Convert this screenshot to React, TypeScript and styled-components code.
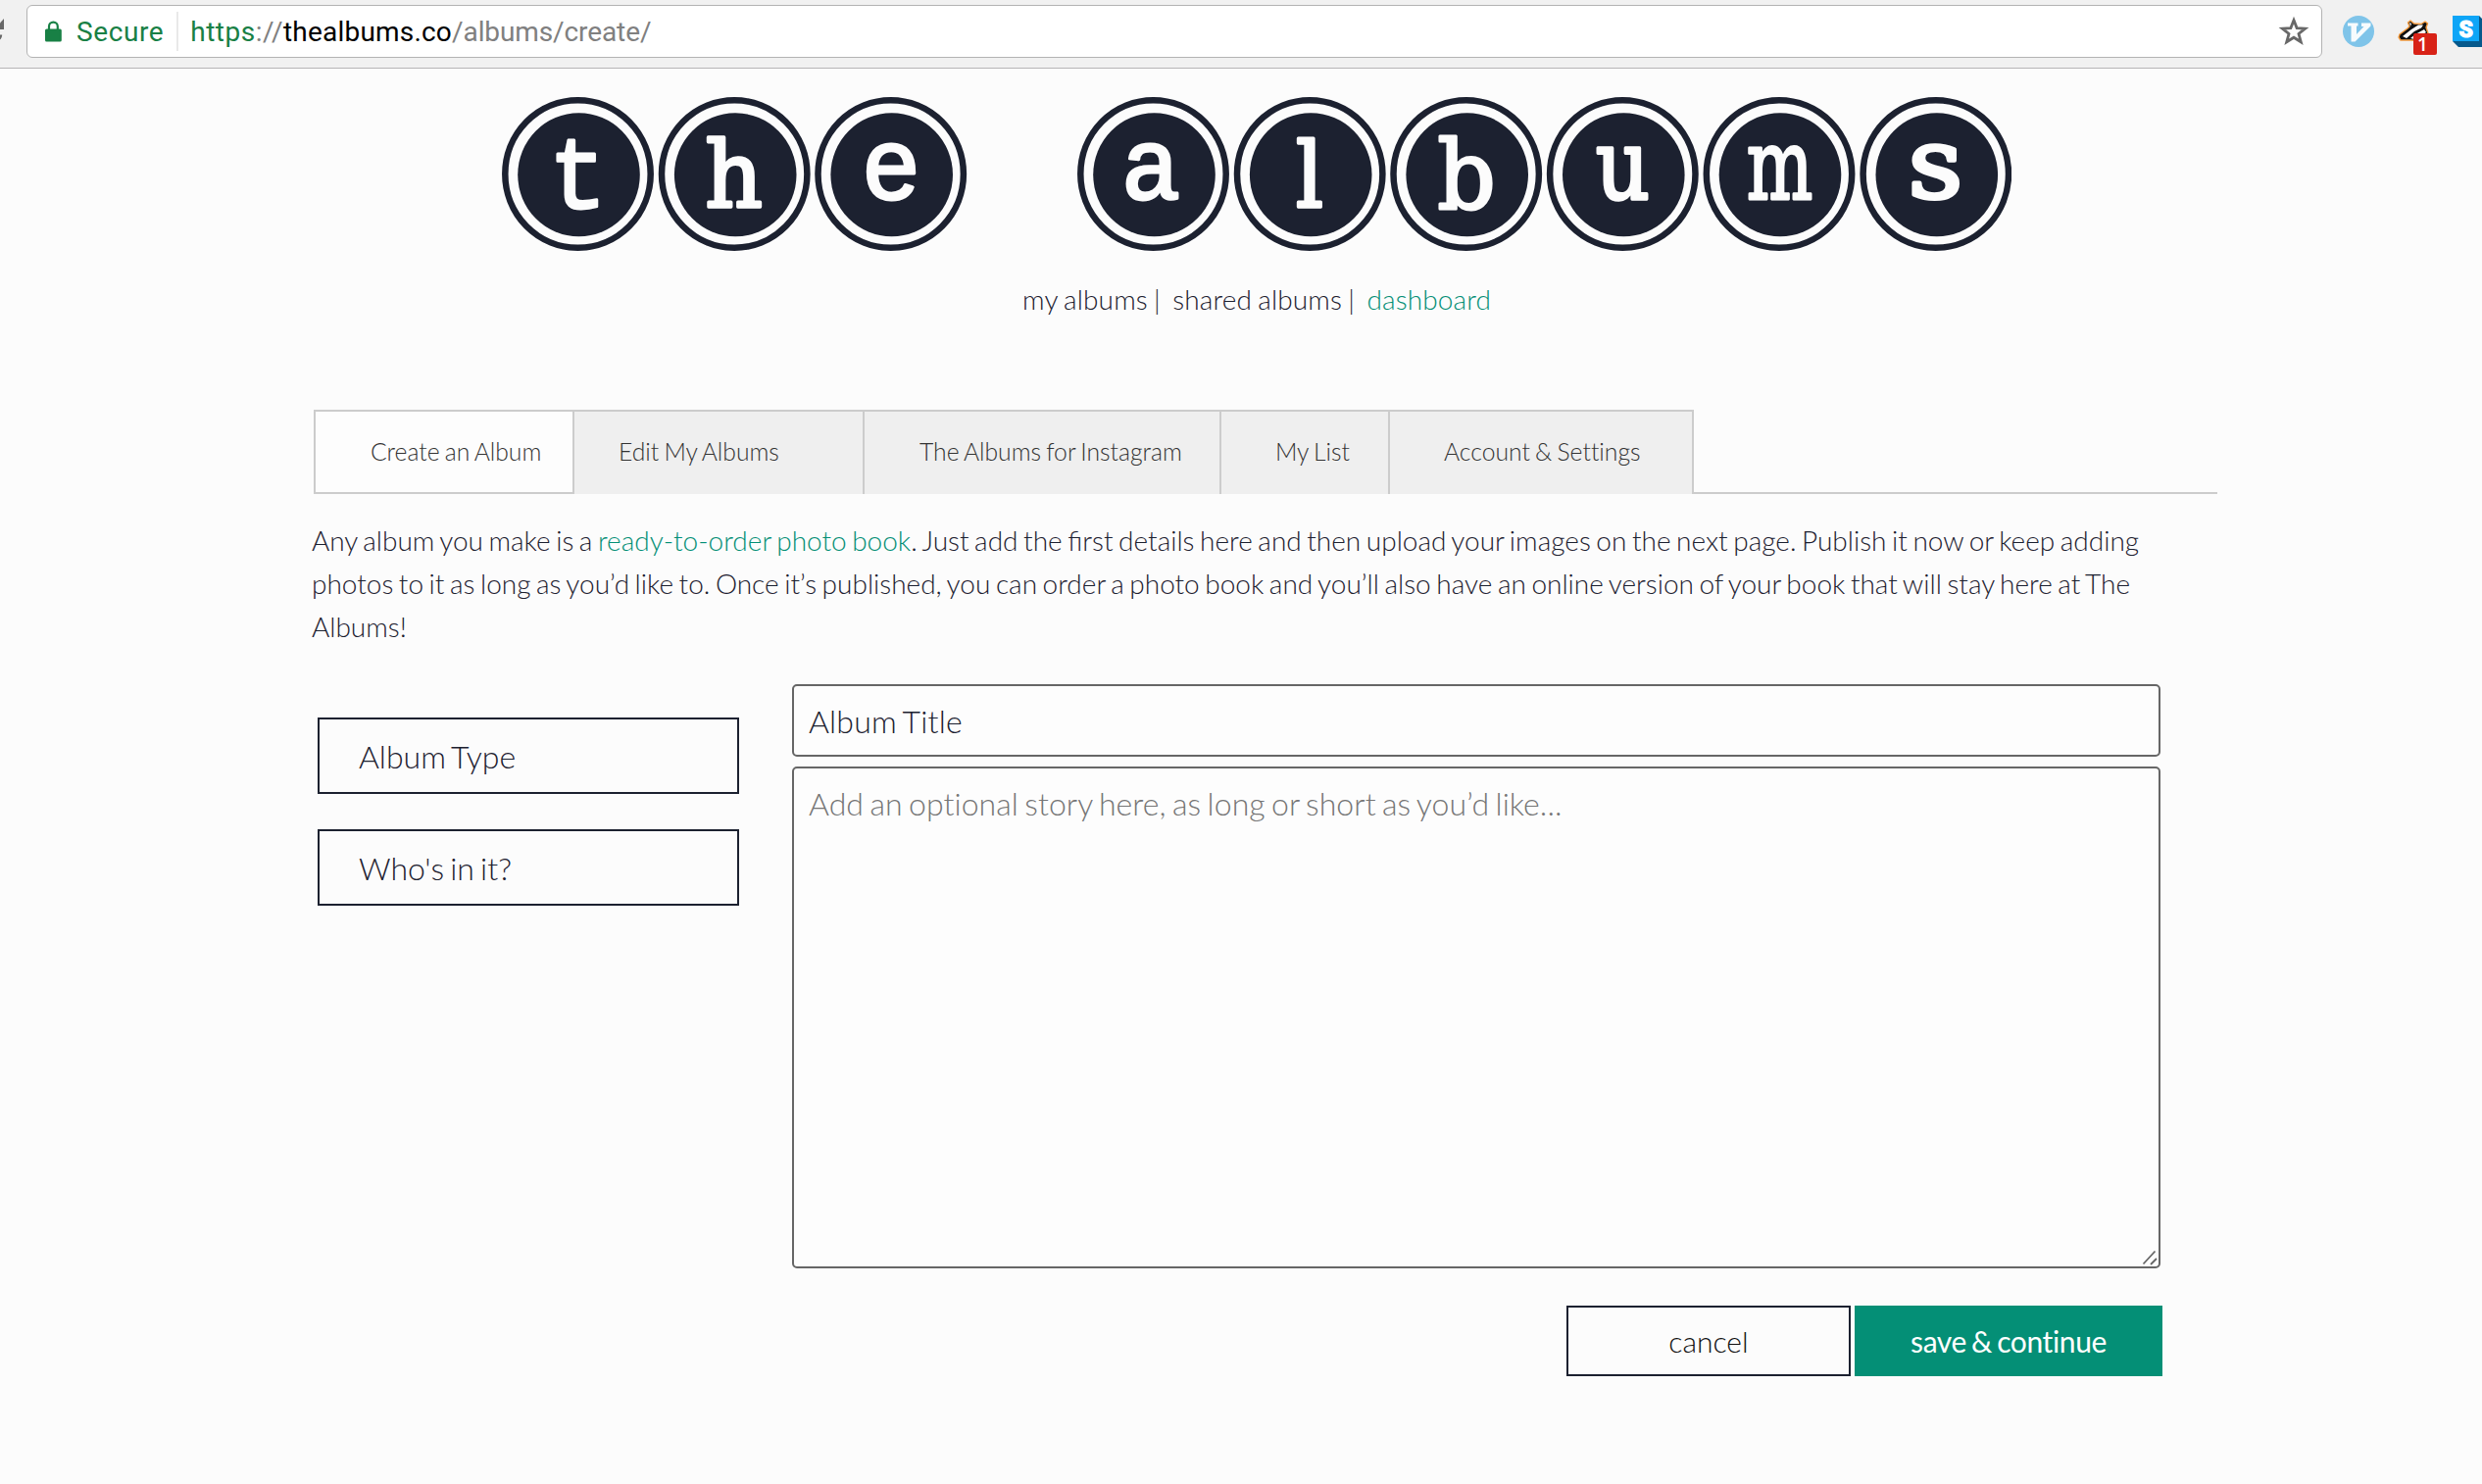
import React from "react";
import styled, { createGlobalStyle } from "styled-components";

const ink = "#1c2130";
const green = "#048f76";

const GlobalStyle = createGlobalStyle`
  * { box-sizing: border-box; }
  html, body { margin: 0; background: #fcfcfc; }
  body {
    font-family: Lato, "Open Sans", sans-serif;
    font-weight: 300;
    color: ${ink};
    overflow: hidden;
  }
`;

const Page = styled.div`
  width: 2532px;
  height: 1514px;
  overflow: hidden;
`;

const BrowserBar = styled.header`
  display: flex;
  align-items: flex-start;
  height: 70px;
  padding-top: 5px;
  background: #f1f1f1;
  border-bottom: 1px solid #b6b4b6;
`;

const ReloadSlot = styled.div`
  flex: none;
  width: 27px;
  height: 54px;
  svg { display: block; }
`;

const AddressField = styled.div`
  display: flex;
  flex: none;
  align-items: center;
  width: 2342px;
  height: 54px;
  padding: 0 12px 0 18px;
  border: 1px solid #b3b3b3;
  border-radius: 6px;
  background: #fff;
  font-family: Roboto, "Liberation Sans", sans-serif;
  font-weight: 400;
  font-size: 28px;
  white-space: nowrap;
`;

const Secure = styled.span`
  margin: 1px 0 0 15px;
  color: #188045;
  letter-spacing: 0.6px;
`;

const FieldDivider = styled.span`
  width: 2px;
  height: 40px;
  margin: 0 12px 0 13px;
  background: #e9e9e9;
`;

const Url = styled.span`
  flex: 1;
  margin-top: 1px;
  color: #808080;
  letter-spacing: -0.1px;
`;
const Scheme = styled.span`
  letter-spacing: 0.5px;
`;
const Protocol = styled.span`color: #188045;`;
const Host = styled.span`
  color: #000;
  letter-spacing: 0.2px;
`;

const Extensions = styled.div`
  display: flex;
  margin-left: 20px;
  height: 54px;
  svg { display: block; flex: none; }
`;

const Masthead = styled.div`
  display: flex;
  flex-direction: column;
  align-items: center;
  padding: 27px 0 0 32px;
`;

const LogoSvg = styled.svg`display: block;`;

const SiteNav = styled.nav`
  display: flex;
  height: 44px;
  margin-top: 26px;
  font-size: 28px;
  line-height: 44px;
  letter-spacing: 0.12px;
  word-spacing: -1.5px;
  white-space: pre;
`;
const NavItem = styled.span<{ $active?: boolean }>`
  color: ${(p) => (p.$active ? green : ink)};
`;

const Content = styled.main`
  width: 1944px;
  margin: 91px 0 0 318px;
`;

const TabRow = styled.div`
  display: flex;
  height: 86px;
  margin-left: 2px;
`;
const Tab = styled.div<{ $width: number; $indent: number; $active?: boolean }>`
  width: ${(p) => p.$width}px;
  padding: 22px 0 0 ${(p) => p.$indent}px;
  border-top: 2px solid #ccc;
  border-right: 2px solid #ccc;
  border-left: ${(p) => (p.$active ? "2px solid #ccc" : "none")};
  border-bottom: ${(p) => (p.$active ? "2px solid #ccc" : "none")};
  background: ${(p) => (p.$active ? "#fdfdfd" : "#efefef")};
  color: #333;
  font-size: 24.7px;
  line-height: 38px;
  word-spacing: -1.5px;
  font-variant-ligatures: none;
  white-space: nowrap;
`;
const TabFill = styled.div`
  flex: 1;
  border-bottom: 2px solid #ccc;
`;

const Intro = styled.p`
  margin: 25px 0 0;
  font-size: 28px;
  line-height: 44px;
  word-spacing: -2.05px;
  white-space: nowrap;
`;
const IntroLine = styled.span`display: block;`;
const Accent = styled.span`color: ${green};`;

const Form = styled.div`
  display: flex;
  gap: 54px;
  margin: 37px 0 0 6px;
`;
const Choices = styled.div`
  display: flex;
  flex-direction: column;
  gap: 36px;
  width: 430px;
  padding-top: 34px;
`;
const Choice = styled.button`
  height: 78px;
  padding: 0 0 0 40px;
  border: 2px solid ${ink};
  background: transparent;
  color: ${ink};
  font: 300 32px Lato, sans-serif;
  word-spacing: -0.08em;
  text-align: left;
`;
const Fields = styled.div`
  display: flex;
  flex-direction: column;
  width: 1398px;
`;
const TitleInput = styled.input`
  width: 1396px;
  height: 74px;
  padding: 0 15px;
  border: 2px solid #666;
  border-radius: 5px;
  background: #fdfdfd;
  color: ${ink};
  font: 300 32px Lato, sans-serif;
  letter-spacing: 0.2px;
  word-spacing: -0.074em;
  font-variant-ligatures: none;
  &::placeholder { color: ${ink}; opacity: 1; }
`;
const StoryWrap = styled.div`
  position: relative;
  width: 1396px;
  height: 512px;
  margin-top: 10px;
`;
const Story = styled.textarea`
  display: block;
  width: 100%;
  height: 100%;
  padding: 17px 15px;
  border: 2px solid #666;
  border-radius: 5px;
  background: #fdfdfd;
  resize: none;
  font: 300 32px/38px Lato, sans-serif;
  letter-spacing: 0.06px;
  word-spacing: -0.074em;
  font-variant-ligatures: none;
  &::placeholder { color: #757575; opacity: 1; }
`;
const Grip = styled.svg`
  position: absolute;
  right: 3px;
  bottom: 3px;
`;
const Actions = styled.div`
  display: flex;
  justify-content: flex-end;
  gap: 4px;
  margin-top: 38px;
`;
const Action = styled.button<{ $primary?: boolean }>`
  width: ${(p) => (p.$primary ? 314 : 290)}px;
  height: 72px;
  padding: 0;
  border: ${(p) => (p.$primary ? "none" : `2px solid ${ink}`)};
  background: ${(p) => (p.$primary ? green : "transparent")};
  color: ${(p) => (p.$primary ? "#fff" : "#111")};
  font: ${(p) => (p.$primary ? 400 : 300)} 30px Lato, sans-serif;
  letter-spacing: ${(p) => (p.$primary ? -0.38 : 0)}px;
  word-spacing: -0.074em;
  font-variant-ligatures: none;
`;

type Key = { ch: string; cx: number; mx: number; base: number; mono?: boolean; size: number; sx: number; w: number };

/* cx is the centre of the ring, mx the middle of the letter, both from the left of the logo */
const keys: Key[] = [
  { ch: "t", cx: 77.5, mx: 77.5, base: 115, mono: true, size: 104, sx: 0.95, w: 3 },
  { ch: "h", cx: 237.2, mx: 236.5, base: 114, size: 93, sx: 0.98, w: 3.5 },
  { ch: "e", cx: 396.7, mx: 397, base: 106, mono: true, size: 103, sx: 0.98, w: 3 },
  { ch: "a", cx: 664.5, mx: 662, base: 106, mono: true, size: 103, sx: 0.98, w: 3 },
  { ch: "l", cx: 824.2, mx: 824, base: 114, size: 92, sx: 0.95, w: 3.5 },
  { ch: "b", cx: 983.7, mx: 984, base: 115.5, size: 98, sx: 0.95, w: 3 },
  { ch: "u", cx: 1143.3, mx: 1143.5, base: 105.5, size: 100, sx: 0.86, w: 3.5 },
  { ch: "m", cx: 1303, mx: 1303.5, base: 105.5, size: 99, sx: 0.72, w: 3 },
  { ch: "s", cx: 1462.8, mx: 1462.5, base: 105, size: 99, sx: 1.1, w: 4 },
];

const Logo = () => (
  <LogoSvg width="1540" height="160" viewBox="0 0 1540 160">
    {keys.map((k) => (
      <g key={k.ch}>
        <ellipse cx={k.cx} cy="80.5" rx="74.2" ry="75.3" fill="none" stroke={ink} strokeWidth="6.5" />
        <ellipse cx={k.cx + 1} cy="81.3" rx="62.3" ry="63" fill={ink} />
        <text
          transform={`translate(${k.mx} ${k.base}) scale(${k.sx} 1)`}
          textAnchor="middle"
          fontFamily={k.mono ? '"Liberation Mono", monospace' : '"DejaVu Serif", serif'}
          fontWeight="400"
          fontSize={k.size}
          fill="#fcfcfc"
          stroke="#fcfcfc"
          strokeWidth={k.w}
          strokeLinejoin="round"
        >
          {k.ch}
        </text>
      </g>
    ))}
  </LogoSvg>
);

const LockIcon = () => (
  <svg width="17" height="22" viewBox="0 0 17 22">
    <path d="M4 10V6a4.4 4.4 0 0 1 8.8 0v4" fill="none" stroke="#188045" strokeWidth="2.2" />
    <rect x="0" y="8.5" width="16.8" height="13" rx="1.6" fill="#188045" />
  </svg>
);

const StarIcon = () => (
  <svg width="32" height="32" viewBox="0 0 32 32">
    <path d="M16 4.6 19.1 12.6 27.7 13.1 21 18.5 23.3 26.8 16 22.2 8.7 26.8 11 18.5 4.3 13.1 12.9 12.6Z" fill="none" stroke="#686868" strokeWidth="2.8" />
  </svg>
);

const ExtensionIcons = () => (
  <svg width="144" height="54" viewBox="2389 5 144 54">
    <circle cx="2406" cy="32" r="16" fill="#7fc4e9" />
    <path d="M2395 23.5H2405.5V26.5H2404V35L2411.5 27H2409V23.5H2418.5V26.5L2402.5 42.5H2398.5V26.5H2395Z" fill="#f7fbfd" />
    <g>
      <path d="M2447 38 2448 35 2456 29 2458 27 2456.5 23 2459 21 2462.5 24 2470 24.5 2474 22 2476.5 24 2475 28 2477 34 2475 42 2460 41 2449 41Z" fill="#111" stroke="#f49b3e" strokeWidth="1.4" strokeLinejoin="round" />
      <path d="M2451 37 2460 30 2467 25.5 2472 25.5 2470 28.5 2463 32 2455 39ZM2459 39 2464 35 2473 30 2475 33 2470 36 2463 40Z" fill="#fff" />
      <path d="M2458 23l2 1-1 3z" fill="#fff" />
      <rect x="2462" y="34" width="24" height="22" rx="2" fill="#d82217" />
      <text x="2471.4" y="52" textAnchor="middle" fontFamily='"Open Sans", sans-serif' fontWeight="600" fontSize="19" fill="#fff">1</text>
    </g>
    <path d="M2502 42 2508 48H2533V20L2529 16V42Z" fill="#06598c" />
    <rect x="2502" y="16" width="27" height="26" fill="#0ea5f7" />
    <text x="2515.8" y="37.5" textAnchor="middle" fontFamily="Roboto, sans-serif" fontWeight="900" fontSize="23" fill="#fff" stroke="#fff" strokeWidth="1">S</text>
  </svg>
);

const tabs = [
  { label: "Create an Album", width: 266, indent: 56, active: true },
  { label: "Edit My Albums", width: 296, indent: 45 },
  { label: "The Albums for Instagram", width: 364, indent: 56 },
  { label: "My List", width: 172, indent: 55 },
  { label: "Account & Settings", width: 310, indent: 55 },
];

export default function App() {
  return (
    <Page>
      <GlobalStyle />
      <BrowserBar>
        <ReloadSlot>
          <svg width="8" height="54" viewBox="0 5 8 54">
            <path d="M4 19V30H-6Z" fill="#686868" />
            <path d="M0 35.5H2.2C2 38 1 40-1 41.5V38Z" fill="#686868" />
          </svg>
        </ReloadSlot>
        <AddressField>
          <LockIcon />
          <Secure>Secure</Secure>
          <FieldDivider />
          <Url>
            <Scheme><Protocol>https</Protocol>://</Scheme><Host>thealbums.co</Host>/albums/create/
          </Url>
          <StarIcon />
        </AddressField>
        <Extensions><ExtensionIcons /></Extensions>
      </BrowserBar>
      <Masthead>
        <Logo />
        <SiteNav>
          <NavItem>my albums |  </NavItem>
          <NavItem>shared albums |  </NavItem>
          <NavItem $active>dashboard</NavItem>
        </SiteNav>
      </Masthead>
      <Content>
        <TabRow>
          {tabs.map((t) => (
            <Tab key={t.label} $width={t.width} $indent={t.indent} $active={t.active}>{t.label}</Tab>
          ))}
          <TabFill />
        </TabRow>
        <Intro>
          <IntroLine>
            Any album you make is a <Accent>ready-to-order photo book</Accent>. Just add the first details here and then upload your images on the next page. Publish it now or keep adding
          </IntroLine>
          <IntroLine>
            photos to it as long as you’d like to. Once it’s published, you can order a photo book and you’ll also have an online version of your book that will stay here at The
          </IntroLine>
          <IntroLine>Albums!</IntroLine>
        </Intro>
        <Form>
          <Choices>
            <Choice>Album Type</Choice>
            <Choice>Who's in it?</Choice>
          </Choices>
          <Fields>
            <TitleInput placeholder="Album Title" />
            <StoryWrap>
              <Story placeholder="Add an optional story here, as long or short as you’d like..." />
              <Grip width="16" height="16" viewBox="0 0 16 16">
                <path d="M1.5 14.5 13.5 1.5M9 15 15 9" stroke="#666" strokeWidth="1.8" />
              </Grip>
            </StoryWrap>
            <Actions>
              <Action>cancel</Action>
              <Action $primary>save &amp; continue</Action>
            </Actions>
          </Fields>
        </Form>
      </Content>
    </Page>
  );
}
